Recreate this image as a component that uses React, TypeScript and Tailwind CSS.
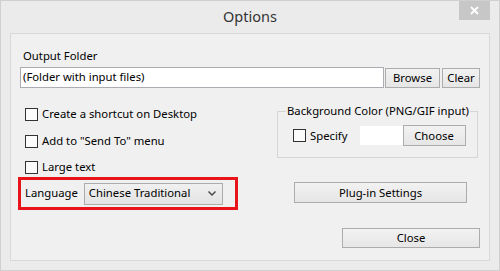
import React from "react";

const font = { fontFamily: '"Segoe UI", "Noto Sans", sans-serif' };

const Checkbox = ({ label }: { label: string }) => (
  <label className="flex items-center h-[16px] text-[11.3px] text-black whitespace-nowrap">
    <span className="w-[13px] h-[13px] border border-[#333] bg-[#fbfbfb] shrink-0" />
    <span className="ml-[4px] leading-none">{label}</span>
  </label>
);

const Button = ({ text, className }: { text: string; className: string }) => (
  <button
    className={`flex items-center justify-center border border-[#acacac] bg-gradient-to-b from-[#f2f2f2] to-[#e6e6e6] text-[11.3px] text-black leading-none whitespace-nowrap ${className}`}
  >
    {text}
  </button>
);

const App = () => {
  return (
    <div
      className="w-[500px] h-[271px] bg-[#ebebeb] border border-[#d0d0d0] flex flex-col overflow-hidden"
      style={font}
    >
      <div className="h-[32px] flex items-start shrink-0">
        <div className="w-[48px]" />
        <div className="flex-1 text-center text-[14.5px] text-[#333] pt-[5px] leading-[20px]">
          Options
        </div>
        <div className="w-[48px] flex justify-end pr-[9px]">
          <div className="w-[31px] h-[20px] bg-[#c7c7c7] flex items-center justify-center mt-[-1px]">
            <svg width="9" height="9" viewBox="0 0 9 9">
              <path d="M1 1 L8 8 M8 1 L1 8" stroke="#fff" strokeWidth="1.8" />
            </svg>
          </div>
        </div>
      </div>

      <div className="mx-[9px] h-[228px] border border-[#d9d9d9] bg-[#f0f0f0] flex flex-col">
        <div className="ml-[12px] mt-[14px] text-[11.3px] leading-[16px] text-black">Output Folder</div>
        <div className="flex items-start mt-[3px] ml-[9px]">
          <div className="w-[364px] h-[21px] border border-[#abadb3] bg-white flex items-center pl-[2px] text-[11.3px] text-black">
            (Folder with input files)
          </div>
          <Button text="Browse" className="ml-[1px] w-[55px] h-[20px] mt-[1px]" />
          <Button text="Clear" className="ml-[2px] w-[38px] h-[20px] mt-[1px]" />
        </div>

        <div className="flex items-start mt-[13px]">
          <div className="flex flex-col ml-[7px]">
            <div className="ml-[7px] mt-[5px]">
              <Checkbox label="Create a shortcut on Desktop" />
            </div>
            <div className="ml-[7px] mt-[11px]">
              <Checkbox label='Add to "Send To" menu' />
            </div>
            <div className="ml-[7px] mt-[10px]">
              <Checkbox label="Large text" />
            </div>
            <div className="mt-[2px] w-[220px] h-[33px] border-[3px] border-[#e8141a] flex items-center pl-[4px]">
              <span className="text-[11.3px] text-black">Language</span>
              <div className="ml-[6px] w-[139px] h-[22px] border border-[#acacac] bg-gradient-to-b from-[#f0f0f0] to-[#e3e3e3] flex items-center pl-[4px] pr-[6px] text-[11.3px] text-black">
                <span className="flex-1">Chinese Traditional</span>
                <svg width="8" height="5" viewBox="0 0 8 5">
                  <path d="M0.5 0.5 L4 4 L7.5 0.5" stroke="#444" strokeWidth="1.4" fill="none" />
                </svg>
              </div>
            </div>
          </div>

          <div className="flex flex-col ml-[39px]">
            <fieldset className="mt-[2px] w-[201px] border border-[#d5d5d5] pl-[8px] pr-[4px] pb-[11px]">
              <legend className="px-[1px] text-[11.3px] leading-[16px] text-black whitespace-nowrap">
                Background Color (PNG/GIF input)
              </legend>
              <div className="flex items-center mt-[6px]">
                <div className="ml-[7px]">
                  <Checkbox label="Specify" />
                </div>
                <div className="ml-[12px] w-[43px] h-[19px] bg-white" />
                <Button text="Choose" className="w-[63px] h-[21px]" />
              </div>
            </fieldset>
            <Button text="Plug-in Settings" className="mt-[24px] ml-[17px] w-[173px] h-[21px]" />
          </div>
        </div>

        <div className="flex justify-end mt-[18px] mr-[9px]">
          <Button text="Close" className="w-[138px] h-[20px]" />
        </div>
      </div>
    </div>
  );
};

export default App;
